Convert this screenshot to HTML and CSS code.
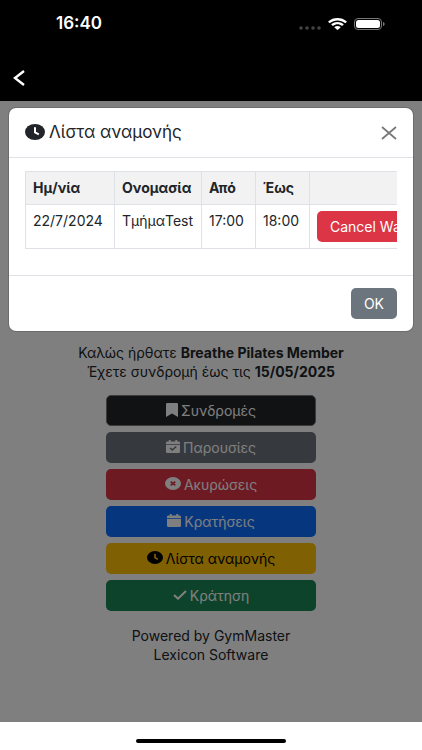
FILE: index.html
```html
<!DOCTYPE html>
<html lang="el">

<head>
  <meta charset="utf-8">
  <title>GymMaster</title>
  <meta name="viewport" content="width=device-width, initial-scale=1">
  <link rel="stylesheet" href="styles.css">
</head>

<body>

  <header class="top-bar">
    <div class="status">
      <span class="time">16:40</span>
      <div class="status-icons">
        <svg class="signal" viewBox="0 0 22 4"><circle cx="2" cy="2" r="1.8"/><circle cx="8" cy="2" r="1.8"/><circle cx="14" cy="2" r="1.8"/><circle cx="20" cy="2" r="1.8"/></svg>
        <svg class="wifi" viewBox="0 0 19 12"><path d="M9.500 0C6 0 2.800 1.200.4 3.300c-.2.200-.2.500 0 .7l1 1c.2.200.5.200.7 0C4.100 3.300 6.700 2.400 9.500 2.400s5.400.9 7.400 2.600c.2.200.5.200.7 0l1-1c.2-.2.200-.5 0-.7C16.200 1.200 13 0 9.500 0z"/><path d="M9.500 4c-2.300 0-4.400.8-6 2.100-.2.200-.2.500 0 .7l1.100 1c.2.200.4.200.6 0C6.400 6.900 7.900 6.300 9.500 6.300s3.100.6 4.300 1.500c.2.200.4.200.6 0l1.100-1c.2-.2.200-.5 0-.7C13.900 4.800 11.800 4 9.500 4z"/><path d="M9.500 7.900c-1.200 0-2.200.4-3 1-.2.200-.2.400 0 .6l2.600 2.300c.2.200.6.200.8 0l2.600-2.300c.2-.2.200-.4 0-.6-.8-.6-1.800-1-3-1z"/></svg>
        <svg class="battery" viewBox="0 0 31 12"><rect x=".5" y=".5" width="27" height="11" rx="3.500" fill="none" stroke="#777"/><rect x="2" y="2" width="24" height="8" rx="2.500" fill="#fff"/><path d="M29 4c1 .3 1.600 1 1.600 2S30 7.700 29 8z" fill="#777"/></svg>
      </div>
    </div>
    <a class="back" href="#" aria-label="Πίσω">
      <svg viewBox="0 0 12 16"><path d="M11 1 2 8l9 7"/></svg>
    </a>
  </header>

  <main class="page">
    <div class="content">
      <p class="welcome">Καλώς ήρθατε <b>Breathe Pilates Member</b><br>
        Έχετε συνδρομή έως τις <b>15/05/2025</b></p>

      <div class="menu">
        <button type="button" class="btn dark">
          <svg class="icon-mark" viewBox="0 0 12 14"><path d="M0 1.200Q0 0 1.200 0h9.600Q12 0 12 1.200V14l-6-3.500L0 14z"/></svg>
          Συνδρομές</button>
        <button type="button" class="btn grey">
          <svg class="icon-cal" viewBox="0 0 14 13"><path fill-rule="evenodd" d="M2.800 0h1.900v1.500h4.600V0h1.900v1.500h1.300Q14 1.500 14 2.800V4H0V2.800Q0 1.500 1.500 1.500h1.300zM0 4.700h14v7Q14 13 12.500 13h-11Q0 13 0 11.700zm10.700 2.200-1-1-3.400 3.200-1.800-1.600-1 1 2.800 2.500z"/></svg>
          Παρουσίες</button>
        <button type="button" class="btn red">
          <svg class="icon-round" viewBox="0 0 16 13"><ellipse cx="8" cy="6.500" rx="8" ry="6.500"/><path class="cross" d="m5.700 4.600 4.600 3.800m0-3.800L5.700 8.400"/></svg>
          Ακυρώσεις</button>
        <button type="button" class="btn blue">
          <svg class="icon-cal" viewBox="0 0 14 13"><path d="M2.800 0h1.900v1.500h4.600V0h1.900v1.500h1.300Q14 1.500 14 2.800V4H0V2.800Q0 1.500 1.500 1.500h1.300zM0 4.700h14v7Q14 13 12.500 13h-11Q0 13 0 11.700z"/></svg>
          Κρατήσεις</button>
        <button type="button" class="btn yellow">
          <svg class="icon-round" viewBox="0 0 16 13"><ellipse cx="8" cy="6.500" rx="8" ry="6.500"/><path class="hands" d="M8 2.700v4l2.900 1.700"/></svg>
          Λίστα αναμονής</button>
        <button type="button" class="btn green">
          <svg class="icon-check" viewBox="0 0 14 10"><path d="m1 5 4 3.700L13 1"/></svg>
          Κράτηση</button>
      </div>

      <p class="powered">Powered by GymMaster<br>Lexicon Software</p>
    </div>

    <div class="backdrop">
      <div class="modal" role="dialog" aria-labelledby="modal-title">
        <div class="modal-header">
          <h1 id="modal-title">
            <svg class="icon-title" viewBox="0 0 20 16"><ellipse cx="10" cy="8" rx="10" ry="8"/><path class="hands" d="M10 3.300v5l3.800 2.100"/></svg>
            Λίστα αναμονής</h1>
          <button type="button" class="close" aria-label="Κλείσιμο">
            <svg viewBox="0 0 16 14"><path d="m1 1 14 12M15 1 1 13"/></svg>
          </button>
        </div>
        <div class="modal-body">
          <div class="table-wrap">
            <table>
              <colgroup>
                <col class="col-date">
                <col class="col-name">
                <col class="col-time">
                <col class="col-time">
                <col class="col-action">
              </colgroup>
              <thead>
                <tr>
                  <th>Ημ/νία</th>
                  <th>Ονομασία</th>
                  <th>Από</th>
                  <th>Έως</th>
                  <th></th>
                </tr>
              </thead>
              <tbody>
                <tr>
                  <td>22/7/2024</td>
                  <td>ΤμήμαTest</td>
                  <td>17:00</td>
                  <td>18:00</td>
                  <td><button type="button" class="btn red">Cancel Waiting</button></td>
                </tr>
              </tbody>
            </table>
          </div>
        </div>
        <div class="modal-footer">
          <button type="button" class="btn grey">OK</button>
        </div>
      </div>
    </div>
  </main>

  <footer class="home-bar">
    <div class="home-line"></div>
  </footer>

</body>

</html>
```

FILE: styles.css
```css
* {
  box-sizing: border-box;
}

body {
  margin: 0;
  min-height: 100vh;
  display: flex;
  flex-direction: column;
  background: #FFF;
  color: #212529;
  font-family: Inter, "DejaVu Sans", sans-serif;
  font-size: 14px;
  line-height: 19px;
}

p,
h1 {
  margin: 0;
}

/* top bar */

.top-bar {
  height: 101px;
  background: #000;
  color: #FFF;
}

.status {
  display: flex;
  justify-content: space-between;
  padding: 14px 37px 0 56px;
}

.time {
  font-size: 17px;
  font-weight: 600;
}

.status-icons {
  display: flex;
  align-items: center;
  gap: 7px;
}

.signal {
  width: 22px;
  height: 4px;
  margin-top: 8px;
  fill: #444;
}

.wifi {
  width: 19px;
  height: 12px;
  fill: #FFF;
}

.battery {
  width: 31px;
  height: 12px;
}

.back {
  display: inline-block;
  padding: 37px 13px 0;
}

.back svg {
  display: block;
  width: 12px;
  height: 16px;
  fill: none;
  stroke: #FFF;
  stroke-width: 2.4;
}

/* page */

.page {
  position: relative;
  flex: 1;
}

.content {
  padding: 242px 16px 0;
  text-align: center;
}

.menu {
  display: flex;
  flex-direction: column;
  gap: 6px;
  width: 54%;
  margin: 14px auto 15px;
}

.btn {
  display: flex;
  align-items: center;
  justify-content: center;
  gap: 3px;
  height: 31px;
  padding: 0 12px;
  border: 1px solid transparent;
  border-radius: 5px;
  color: #FFF;
  font: inherit;
  white-space: nowrap;
  cursor: pointer;
}

.btn svg,
h1 svg {
  flex: none;
  margin-bottom: 2px;
  fill: currentColor;
}

.dark {
  background: #212529;
  border-color: #777;
}

.grey {
  background: #6C757D;
}

.red {
  background: #DC3545;
}

.blue {
  background: #0D6EFD;
}

.yellow {
  background: #FFC107;
  color: #000;
}

.green {
  background: #198754;
}

.icon-mark {
  width: 12px;
  height: 14px;
}

.icon-cal {
  width: 14px;
  height: 13px;
}

.icon-round {
  width: 16px;
  height: 13px;
}

.icon-check {
  width: 14px;
  height: 10px;
}

.icon-check path {
  fill: none;
  stroke: currentColor;
  stroke-width: 2;
}

.cross {
  stroke: #DC3545;
  stroke-width: 1.8;
}

.hands {
  fill: none;
  stroke: #FFC107;
  stroke-width: 1.6;
}

/* modal */

.backdrop {
  position: absolute;
  inset: 0;
  padding: 7px 9px;
  background: rgba(0, 0, 0, 0.5);
}

.modal {
  background: #FFF;
  border-radius: 7px;
  box-shadow: 0 0 0 1px #6C6C6C;
}

.modal-header {
  display: flex;
  align-items: center;
  justify-content: space-between;
  height: 50px;
  padding: 0 16px;
  border-bottom: 1px solid #DEE2E6;
}

h1 {
  display: flex;
  align-items: center;
  gap: 4px;
  font-size: 17px;
  font-weight: 400;
}

.icon-title {
  width: 20px;
  height: 16px;
}

.icon-title .hands {
  stroke: #FFF;
  stroke-width: 2;
}

.close {
  padding: 0;
  border: 0;
  background: none;
  cursor: pointer;
}

.close svg {
  display: block;
  width: 16px;
  height: 14px;
  fill: none;
  stroke: #777;
  stroke-width: 1.7;
}

.modal-body {
  padding: 13px 16px 26px;
}

.table-wrap {
  overflow: hidden;
}

table {
  width: 440px;
  table-layout: fixed;
  border-collapse: collapse;
}

.col-date {
  width: 89px;
}

.col-name {
  width: 87px;
}

.col-time {
  width: 54px;
}

th,
td {
  padding: 6px 7px;
  border: 1px solid #DEE2E6;
  text-align: left;
  vertical-align: top;
  white-space: nowrap;
}

th {
  height: 33px;
  background: #F2F2F2;
  font-weight: 700;
}

.modal-footer {
  display: flex;
  justify-content: flex-end;
  padding: 12px 16px;
  border-top: 1px solid #DEE2E6;
}

/* home bar */

.home-bar {
  display: flex;
  justify-content: center;
  height: 28px;
  padding-top: 17px;
}

.home-line {
  width: 150px;
  height: 4px;
  border-radius: 2px;
  background: #000;
}
```
